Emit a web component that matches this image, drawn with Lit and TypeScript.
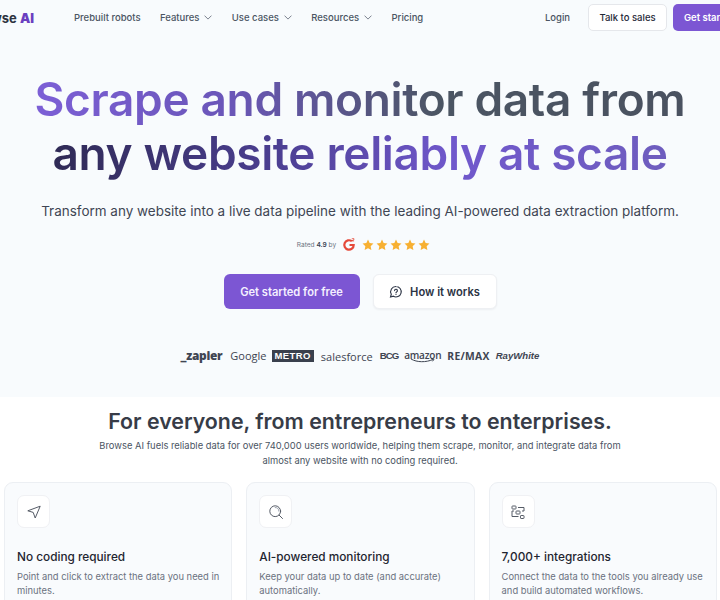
import { LitElement, html, css, svg } from "lit";
import { customElement } from "lit/decorators.js";

const chev = html`<svg class="chev" viewBox="0 0 10 6" width="8" height="5"><path d="M1 1l4 4 4-4" fill="none" stroke="#6b7280" stroke-width="1.1" stroke-linecap="round" stroke-linejoin="round"/></svg>`;
const star = svg`<path d="M6 .6l1.65 3.5 3.8.5-2.8 2.65.72 3.8L6 9.2l-3.37 1.85.72-3.8L.55 4.6l3.8-.5z" fill="#f7b032"/>`;

@customElement("app-root")
export class AppRoot extends LitElement {
  static styles = css`
    :host { display: block; width: 720px; height: 600px; overflow: hidden; background: #f8fbfd; font-family: Inter, "Liberation Sans", sans-serif; color: #374151; }
    .nav { width: 805px; margin-left: -40px; display: flex; align-items: center; justify-content: space-between; height: 35px; }
    .left, .right { display: flex; align-items: center; }
    .logo { font-size: 13px; font-weight: 700; color: #2d3340; width: 74px; direction: rtl; flex: none; margin-right: 40px; white-space: nowrap; }
    .logo span { direction: ltr; unicode-bidi: isolate; display: inline-block; }
    .logo b { color: #6a3fc0; }
    .links { display: flex; gap: 19.4px; font-size: 9.5px; font-weight: 500; color: #4b5563; }
    .links span { display: inline-flex; align-items: center; gap: 5px; white-space: nowrap; }
    .login { font-size: 9.5px; font-weight: 500; color: #4b5563; margin-right: 18px; }
    .talk { height: 27px; width: 79px; box-sizing: border-box; border: 1px solid #e5e7eb; border-radius: 5px; background: #fff; display: flex; align-items: center; justify-content: center; font-size: 9.5px; font-weight: 500; color: #1f2937; margin-right: 6px; }
    .get { height: 27px; width: 92px; box-sizing: border-box; padding-left: 11px; border-radius: 5px; background: #7c56d3; color: #fff; font-size: 9.5px; font-weight: 600; display: flex; align-items: center; }
    h1 { margin: 37px 0 0; font-size: 46px; line-height: 54px; font-weight: 600; text-align: center; letter-spacing: -0.35px; }
    h1 span { display: block; width: max-content; margin: 0 auto; color: transparent; -webkit-background-clip: text; background-clip: text; }
    .l1 { background-image: linear-gradient(90deg, #7c5fd6 0%, #6a56b8 30%, #4b5563 62%, #4a5260 100%); }
    .l2 { background-image: linear-gradient(90deg, #2f2a55 0%, #4a3e8f 35%, #7058cc 65%, #6e5dbe 100%); }
    .sub { margin: 20px 0 0; text-align: center; font-size: 13.47px; line-height: 22px; color: #3f4654; }
    .rating { margin-top: 14px; padding-left: 7px; display: flex; align-items: center; justify-content: center; height: 18px; font-size: 6.55px; color: #6b7280; gap: 6px; }
    .rating b { color: #374151; font-weight: 600; }
    .stars { display: flex; gap: 2px; }
    .cta { margin-top: 20px; display: flex; justify-content: center; gap: 13px; }
    .cta > div { height: 35px; border-radius: 6px; display: flex; align-items: center; justify-content: center; font-size: 11.15px; font-weight: 600; box-sizing: border-box; }
    .primary { width: 136px; background: #7c56d3; color: #f4f0ff; }
    .secondary { width: 124px; background: #fff; color: #2b3344; gap: 7px; border: 1px solid #eef0f3; box-shadow: 0 1px 2px rgba(17,24,39,.05); }
    .logos { margin-top: 37px; display: flex; justify-content: center; align-items: center; height: 20px; color: #3f4552; gap: 6px; }
    .logos span { white-space: nowrap; line-height: 1; }
    .zapier { font-family: "Open Sans", sans-serif; font-weight: 800; font-size: 11.9px; letter-spacing: -.3px; }
    .google { font-family: "Open Sans", sans-serif; font-size: 11px; margin: -2px -1px 0 2px; }
    .metro { background: #3a404d; color: #fff; font-family: "Liberation Sans", sans-serif; font-weight: 700; font-size: 9.5px; padding: 1px 3px; letter-spacing: .4px; }
    .sf { font-family: "Open Sans", sans-serif; font-size: 11px; margin-left: 1px; }
    .bcg { font-family: "Liberation Sans", sans-serif; font-weight: 700; font-size: 9.7px; letter-spacing: -1px; margin-left: 1px; }
    .amz { position: relative; font-family: "Open Sans", sans-serif; font-weight: 600; font-size: 10px; letter-spacing: -.2px; padding-bottom: 3px; }
    .amz svg { position: absolute; left: 6px; bottom: 0; }
    .remax { font-family: "Open Sans", sans-serif; font-weight: 700; font-size: 10.3px; letter-spacing: .3px; }
    .ray { font-family: "Liberation Sans", sans-serif; font-style: italic; font-weight: 700; font-size: 9.6px; }
    .section { margin-top: 31px; background: #fff; padding-top: 11px; height: 300px; }
    h2 { margin: 0; text-align: center; font-size: 21.35px; line-height: 26px; font-weight: 600; color: #373c47; }
    .desc { margin: 4px auto 0; width: 530px; text-align: center; font-size: 9.4px; line-height: 15px; color: #4b5563; }
    .cards { margin-top: 14px; padding: 0 4px; display: grid; grid-template-columns: repeat(3, 228.3px); gap: 14px; }
    .card { height: 160px; box-sizing: border-box; border: 1px solid #eceff3; border-radius: 9px; padding: 12px 8px 12px 12px; background: #f9fbfd; }
    .ic { width: 33px; height: 33px; box-sizing: border-box; border: 1px solid #f0f1f4; border-radius: 7px; background: #fff; display: flex; align-items: center; justify-content: center; }
    h3 { margin: 21px 0 0; font-size: 11.8px; line-height: 16px; font-weight: 500; color: #1f2530; }
    .card p { margin: 5px 0 0; font-size: 9.4px; line-height: 14px; color: #6b7280; }
  `;
  render() {
    return html`
      <div class="nav">
        <div class="left">
          <div class="logo"><span>Browse <b>AI</b></span></div>
          <div class="links"><span>Prebuilt robots</span><span>Features ${chev}</span><span>Use cases ${chev}</span><span>Resources ${chev}</span><span>Pricing</span></div>
        </div>
        <div class="right"><div class="login">Login</div><div class="talk">Talk to sales</div><div class="get">Get started</div></div>
      </div>
      <h1><span class="l1">Scrape and monitor data from</span><span class="l2">any website reliably at scale</span></h1>
      <p class="sub">Transform any website into a live data pipeline with the leading AI-powered data extraction platform.</p>
      <div class="rating">
        <div>Rated <b>4.9</b> by</div>
        <svg width="14" height="14" viewBox="0 0 14 14"><path d="M9.8 3.2A4.7 4.7 0 1 0 11.7 7H7.5" fill="none" stroke="#e5493a" stroke-width="2.2"/><path d="M9.8 .7h2.2v1l-2.2 1.200h2.300" fill="none" stroke="#e5493a" stroke-width=".8"/></svg>
        <div class="stars">${[0,1,2,3,4].map(()=>html`<svg width="12" height="12" viewBox="0 0 12 12">${star}</svg>`)}</div>
      </div>
      <div class="cta">
        <div class="primary">Get started for free</div>
        <div class="secondary"><svg width="14" height="14" viewBox="0 0 14 14" fill="none" stroke="#2b3344" stroke-width="1.1"><path d="M7 1.5a5.2 5.2 0 1 1-2.6 9.7L1.5 12l.8-2.8A5.2 5.2 0 0 1 7 1.5z"/><path d="M5.6 5.6a1.4 1.4 0 1 1 2 1.3c-.4.2-.6.5-.6.9M7 9.4v.1" stroke-linecap="round"/></svg>How it works</div>
      </div>
      <div class="logos">
        <span class="zapier">_zapier</span><span class="google">Google</span><span class="metro">METRO</span><span class="sf">salesforce</span><span class="bcg">BCG</span>
        <span class="amz">amazon<svg width="26" height="5" viewBox="0 0 26 5"><path d="M1 1c6 3.5 15 3.5 22 .5M21 .5l3 .8-1.5 2" fill="none" stroke="#3f4552" stroke-width="1"/></svg></span>
        <span class="remax">RE/MAX</span><span class="ray">RayWhite</span>
      </div>
      <div class="section">
        <h2>For everyone, from entrepreneurs to enterprises.</h2>
        <p class="desc">Browse AI fuels reliable data for over 740,000 users worldwide, helping them scrape, monitor, and integrate data from almost any website with no coding required.</p>
        <div class="cards">
          <div class="card"><div class="ic"><svg width="16" height="16" viewBox="0 0 16 16" fill="none" stroke="#555b66" stroke-width="1" stroke-linejoin="round"><path d="M14.200 2.200L1.800 6.800l5.400 1.600L9.200 14z"/></svg></div><h3>No coding required</h3><p>Point and click to extract the data you need in minutes.</p></div>
          <div class="card"><div class="ic"><svg width="16" height="16" viewBox="0 0 16 16" fill="none" stroke="#555b66" stroke-width="1" stroke-linecap="round"><circle cx="7.200" cy="7.200" r="5.400"/><path d="M11.200 11.200L14.500 14.500"/><path d="M7.200 3.500a3.700 3.700 0 0 1 3.700 3.700" stroke="#9ca3af"/></svg></div><h3>AI-powered monitoring</h3><p>Keep your data up to date (and accurate) automatically.</p></div>
          <div class="card"><div class="ic"><svg width="16" height="16" viewBox="0 0 16 16" fill="none" stroke="#555b66" stroke-width="1"><rect x="2" y="2" width="4" height="3" rx=".6"/><rect x="6" y="7" width="4" height="3" rx=".6"/><rect x="10.500" y="11.500" width="3.500" height="3" rx=".6"/><path d="M8 3.500h6V7h-2M4 7H2v5.500h6.500"/></svg></div><h3>7,000+ integrations</h3><p>Connect the data to the tools you already use and build automated workflows.</p></div>
        </div>
      </div>
    `;
  }
}
